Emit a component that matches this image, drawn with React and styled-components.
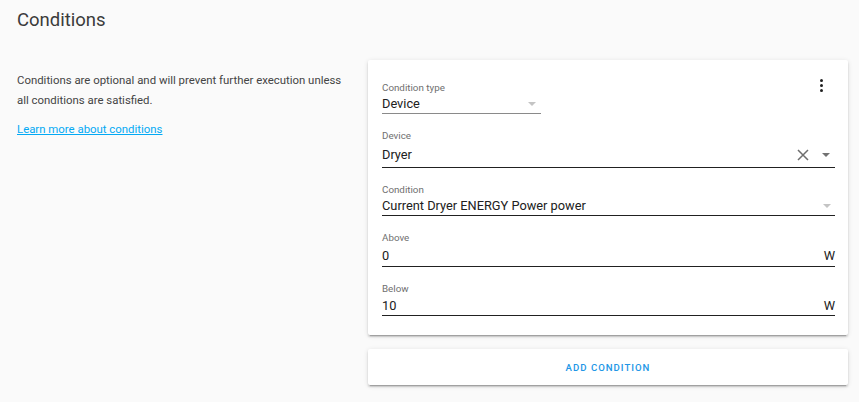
import React from "react";
import styled, { createGlobalStyle } from "styled-components";

const GlobalStyle = createGlobalStyle`
  html, body {
    margin: 0;
    padding: 0;
    background: #fafafa;
    font-family: Roboto, "Liberation Sans", sans-serif;
  }
`;

const Page = styled.div`
  width: 859px;
  height: 402px;
  box-sizing: border-box;
  padding: 0 11px 0 17px;
  overflow: hidden;
`;

const Title = styled.h1`
  margin: 0;
  height: 60px;
  padding-top: 8px;
  box-sizing: border-box;
  font-size: 18.5px;
  font-weight: 400;
  color: #3b3b3b;
  line-height: 24px;
`;

const Columns = styled.div`
  display: flex;
`;

const Intro = styled.div`
  width: 351px;
  box-sizing: border-box;
  padding: 10px 22px 0 0;
  font-size: 11.4px;
  line-height: 20px;
  color: #444;

  p {
    margin: 0 0 9px;
  }
  a {
    color: #03a9f4;
    text-decoration: underline;
  }
`;

const Stack = styled.div`
  width: 480px;
  display: flex;
  flex-direction: column;
  gap: 14px;
`;

const Card = styled.div`
  background: #fff;
  border-radius: 2px;
  box-shadow: 0 2px 2px 0 rgba(0, 0, 0, 0.14), 0 1px 5px 0 rgba(0, 0, 0, 0.12),
    0 3px 1px -2px rgba(0, 0, 0, 0.2);
`;

const FormCard = styled(Card)`
  padding: 22px 13px 19px 14px;
  display: flex;
  flex-direction: column;
  gap: 16px;
`;

const TopRow = styled.div`
  display: flex;
  justify-content: space-between;
  align-items: flex-start;
`;

const Menu = styled.div`
  margin-top: -3px;
  margin-right: 12px;
  display: flex;
  flex-direction: column;
  gap: 2px;
  span {
    width: 3px;
    height: 3px;
    border-radius: 50%;
    background: #212121;
  }
`;

const Field = styled.div`
  width: ${(p) => (p.$width ? p.$width + "px" : "100%")};
`;

const Label = styled.div`
  font-size: 9.8px;
  line-height: 12px;
  color: #6f6f6f;
`;

const InputRow = styled.div`
  display: flex;
  align-items: center;
  height: ${(p) => p.$h}px;
  border-bottom: 1px solid ${(p) => (p.$light ? "#8a8a8a" : "#212121")};
  font-size: 12.8px;
  color: #212121;
`;

const Value = styled.span`
  flex: 1;
`;

const Suffix = styled.span`
  font-size: 12.8px;
  color: #212121;
`;

const Arrow = styled.span`
  width: 0;
  height: 0;
  border-left: 4.5px solid transparent;
  border-right: 4.5px solid transparent;
  border-top: 4.5px solid ${(p) => (p.$dark ? "#727272" : "#c4c4c4")};
  margin-right: ${(p) => p.$mr}px;
`;

const Clear = styled.svg`
  width: 12px;
  height: 12px;
  margin-right: 13px;
`;

const AddCard = styled(Card)`
  height: 36px;
  display: flex;
  align-items: center;
  justify-content: center;
  font-size: 9.6px;
  font-weight: 500;
  letter-spacing: 1px;
  color: #2196e6;
`;

const App = () => {
  return (
    <>
      <GlobalStyle />
      <Page>
        <Title>Conditions</Title>
        <Columns>
          <Intro>
            <p>
              Conditions are optional and will prevent further execution unless
              all conditions are satisfied.
            </p>
            <a href="#">Learn more about conditions</a>
          </Intro>
          <Stack>
            <FormCard>
              <TopRow>
                <Field $width={159}>
                  <Label>Condition type</Label>
                  <InputRow $h={19} $light>
                    <Value>Device</Value>
                    <Arrow $mr={5} />
                  </InputRow>
                </Field>
                <Menu>
                  <span />
                  <span />
                  <span />
                </Menu>
              </TopRow>
              <Field>
                <Label>Device</Label>
                <InputRow $h={25}>
                  <Value>Dryer</Value>
                  <Clear viewBox="0 0 12 12">
                    <path
                      d="M1 1L11 11M11 1L1 11"
                      stroke="#6e6e6e"
                      strokeWidth="1.5"
                    />
                  </Clear>
                  <Arrow $dark $mr={5} />
                </InputRow>
              </Field>
              <Field>
                <Label>Condition</Label>
                <InputRow $h={19}>
                  <Value>Current Dryer ENERGY Power power</Value>
                  <Arrow $mr={4} />
                </InputRow>
              </Field>
              <Field>
                <Label>Above</Label>
                <InputRow $h={22}>
                  <Value>0</Value>
                  <Suffix>W</Suffix>
                </InputRow>
              </Field>
              <Field>
                <Label>Below</Label>
                <InputRow $h={20}>
                  <Value>10</Value>
                  <Suffix>W</Suffix>
                </InputRow>
              </Field>
            </FormCard>
            <AddCard>ADD CONDITION</AddCard>
          </Stack>
        </Columns>
      </Page>
    </>
  );
};

export default App;
